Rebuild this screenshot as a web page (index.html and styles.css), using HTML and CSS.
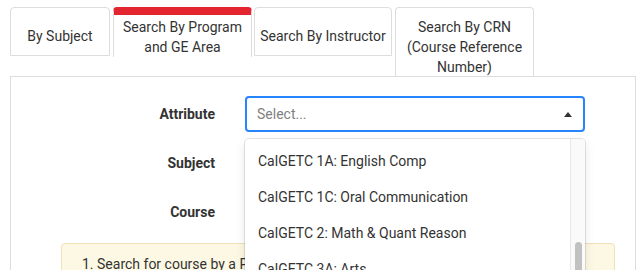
FILE: index.html
```html
<!DOCTYPE html>
<html lang="en">
<head>
    <meta charset="UTF-8">
    <title>Class Search</title>
    <link rel="stylesheet" href="styles.css">
</head>
<body>
    <div class="tabs">
        <div class="tab tab--subject">By Subject</div>
        <div class="tab tab--active">Search By Program and GE Area</div>
        <div class="tab tab--instructor">Search By Instructor</div>
        <div class="tab tab--crn">Search By CRN (Course Reference Number)</div>
    </div>

    <div class="panel">
        <div class="form-row">
            <label class="form-label">Attribute</label>
            <div class="select select--open">
                <div class="select__control">
                    <span class="select__placeholder">Select...</span>
                    <span class="select__caret"></span>
                </div>
                <div class="select__menu">
                    <div class="select__option">CalGETC 1A: English Comp</div>
                    <div class="select__option">CalGETC 1C: Oral Communication</div>
                    <div class="select__option">CalGETC 2: Math &amp; Quant Reason</div>
                    <div class="select__option">CalGETC 3A: Arts</div>
                    <div class="select__option">CalGETC 3B: Humanities</div>
                    <div class="select__option">CalGETC 4: Social &amp; Behavioral Sci</div>
                    <div class="select__scrollbar"><div class="select__thumb"></div></div>
                </div>
            </div>
        </div>
        <div class="form-row">
            <label class="form-label">Subject</label>
            <div class="select">
                <div class="select__control select__control--plain"></div>
            </div>
        </div>
        <div class="form-row">
            <label class="form-label">Course</label>
            <div class="select">
                <div class="select__control select__control--plain"></div>
            </div>
        </div>

        <div class="info-box">
            1. Search for course by a Program or GE Area attribute.
        </div>
    </div>
</body>
</html>
```

FILE: styles.css
```css
* {
    margin: 0;
    padding: 0;
    box-sizing: border-box;
}

body {
    font-family: Roboto, "Liberation Sans", sans-serif;
    color: #333;
    background: #fff;
    overflow: hidden;
}

/* tabs */
.tabs {
    display: flex;
    align-items: flex-start;
    height: 76px;
    padding: 7px 0 0 10px;
}

.tab {
    border: 1px solid #ddd;
    border-radius: 4px 4px 0 0;
    font-size: 14px;
    line-height: 20px;
    text-align: center;
    background: #fff;
    margin-right: 2px;
}

.tab--subject {
    width: 100px;
    padding: 18px 10px 9px;
    margin-right: 3px;
}

.tab--active {
    width: 139px;
    padding: 2px 6px 0;
    border-top: 8px solid #e2252f;
    border-bottom: none;
    margin-right: 2px;
}

.tab--instructor {
    width: 138px;
    padding: 18px 4px 9px;
    margin-right: 3px;
}

.tab--crn {
    width: 139px;
    padding: 9px 8px 0;
    height: 70px;
    border-bottom: none;
}

/* panel */
.panel {
    position: relative;
    margin-left: 10px;
    width: 626px;
    height: 300px;
    border: 1px solid #ddd;
    border-bottom: none;
    padding-top: 19px;
}

.form-row {
    display: grid;
    grid-template-columns: 204px 340px;
    column-gap: 30px;
    align-items: center;
    margin-bottom: 13px;
}

.form-label {
    text-align: right;
    font-size: 14px;
    font-weight: 700;
}

.select {
    position: relative;
}

.select__control {
    display: flex;
    align-items: center;
    justify-content: space-between;
    height: 36px;
    padding: 0 10px 0 11px;
    border: 1px solid #ccc;
    border-radius: 4px;
    background: #fff;
}

.select--open .select__control {
    border: 2px solid #2684ff;
    padding-left: 10px;
}

.select__placeholder {
    color: #808080;
    font-size: 14px;
}

.select__caret {
    width: 0;
    height: 0;
    border-left: 4px solid transparent;
    border-right: 4px solid transparent;
    border-bottom: 5px solid #333;
    margin-right: 1px;
}

.select__menu {
    position: absolute;
    top: 43px;
    left: 0;
    width: 340px;
    height: 240px;
    padding-top: 4px;
    overflow: hidden;
    background: #fff;
    border-radius: 4px;
    box-shadow: 0 0 0 1px rgba(0, 0, 0, 0.1), 0 4px 11px rgba(0, 0, 0, 0.1);
    z-index: 10;
}

.select__option {
    padding: 8px 13px;
    font-size: 14px;
    line-height: 20px;
    color: #333;
}

.select__scrollbar {
    position: absolute;
    top: 0;
    right: 0;
    width: 15px;
    height: 100%;
    background: #fafafa;
    border-left: 1px solid #e8e8e8;
}

.select__thumb {
    position: absolute;
    top: 103px;
    left: 4px;
    width: 7px;
    height: 60px;
    border-radius: 4px;
    background: #c1c1c1;
}

/* notice */
.info-box {
    margin: 1px 20px 0 50px;
    padding: 10px 20px;
    background: #fcf8e3;
    border: 1px solid #f0e2b6;
    border-radius: 4px;
    font-size: 14px;
    line-height: 20px;
}
```
